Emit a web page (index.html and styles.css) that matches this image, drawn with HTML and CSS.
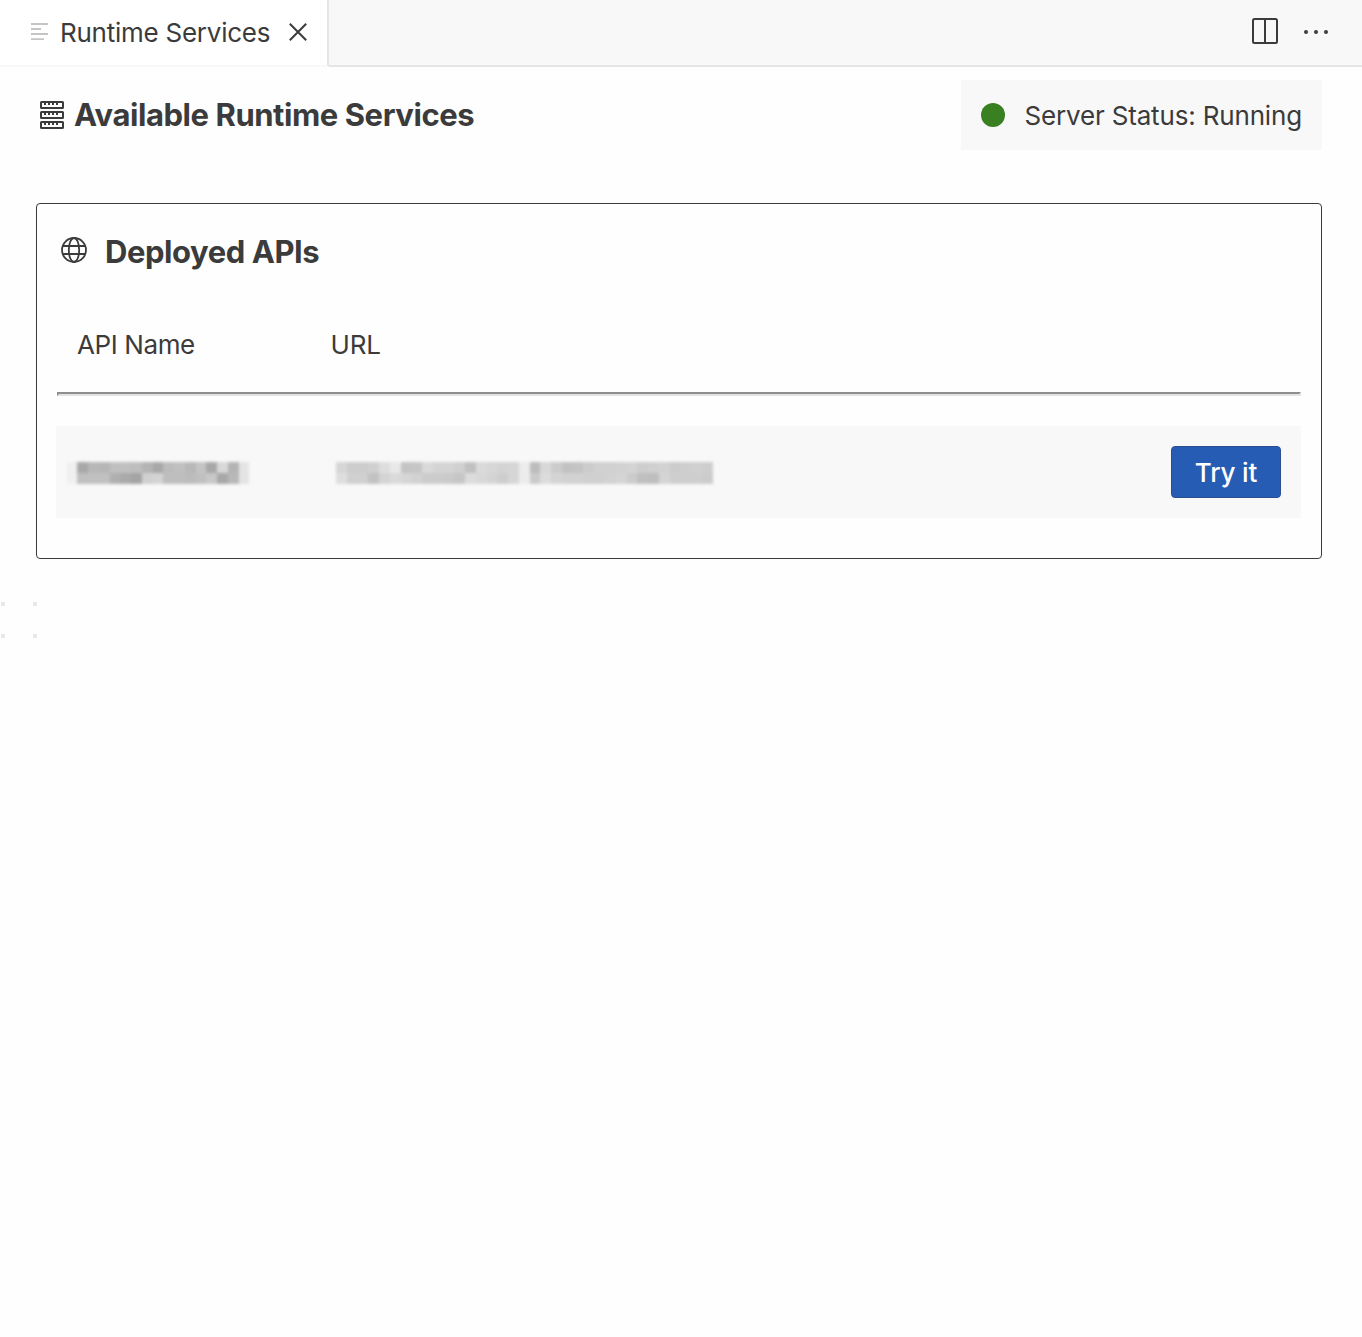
FILE: index.html
```html
<!DOCTYPE html>
<html lang="en">
<head>
<meta charset="utf-8">
<title>Runtime Services</title>
<link rel="stylesheet" href="styles.css">
</head>
<body>
<header class="tabbar">
  <div class="tab">
    <svg class="tab-icon" width="18" height="18" viewBox="0 0 18 18"><path d="M0 1h17M0 6h10M0 11h17M0 16.2h13" stroke="#c5c5c5" stroke-width="1.8"/></svg>
    <span class="tab-label">Runtime Services</span>
    <svg class="close" width="18" height="18" viewBox="0 0 18 18"><path d="M.8.8 17.2 17.2M17.2.8.8 17.2" stroke="#3b3b3b" stroke-width="2"/></svg>
  </div>
  <div class="actions">
    <svg width="26" height="26" viewBox="0 0 26 26" fill="none" stroke="#3b3b3b" stroke-width="2"><rect x="1" y="1" width="24" height="24" rx="1.5"/><path d="M13 1v24"/></svg>
    <svg width="26" height="26" viewBox="0 0 26 26" fill="#3b3b3b"><circle cx="3" cy="14" r="2"/><circle cx="13" cy="14" r="2"/><circle cx="23" cy="14" r="2"/></svg>
  </div>
</header>
<main class="page">
  <div class="heading">
    <div class="title">
      <svg width="24" height="28" viewBox="0 0 24 28" fill="none" stroke="#3b3b3b" stroke-width="2"><g id="unit"><rect x="1" y="1" width="22" height="6" rx=".5"/><path d="M5 1v3M9 1v3M13 1v3M17 1v3"/></g><use href="#unit" y="10"/><use href="#unit" y="20"/></svg>
      <h1>Available Runtime Services</h1>
    </div>
    <div class="status"><span class="dot"></span><span class="status-text">Server Status: Running</span></div>
  </div>
  <section class="panel">
    <div class="panel-title">
      <svg width="26" height="26" viewBox="0 0 26 26" fill="none" stroke="#3b3b3b" stroke-width="1.8"><circle cx="13" cy="13" r="12"/><ellipse cx="13" cy="13" rx="5.2" ry="12"/><path d="M2 9h22M2 17h22"/></svg>
      <h2>Deployed APIs</h2>
    </div>
    <div class="columns"><span class="name-col">API Name</span><span class="url-col">URL</span></div>
    <hr class="rule">
    <div class="row">
      <svg class="masked" id="cells" width="700" height="92" viewBox="0 0 700 92" shape-rendering="crispEdges"></svg>
      <button class="try">Try it</button>
    </div>
  </section>
  <svg class="marks" width="40" height="40" viewBox="0 0 40 40" fill="#e8e8e8"><path d="M1 1h4v4H1zM33 1h4v4h-4zM1 33h4v4H1zM33 33h4v4h-4z"/></svg>
</main>
<script src="mask.js"></script>
</body>
</html>
```
FILE: styles.css
```css
* { box-sizing: border-box; }
body { margin: 0; background: #fefefe; color: #3b3b3b; font: 26px/32px Inter, "Liberation Sans", sans-serif; }
svg { display: block; flex: none; }
h1, h2 { margin: 0; font-size: 31px; line-height: 38px; font-weight: 700; letter-spacing: -0.44px; white-space: nowrap; }
.tabbar { display: flex; justify-content: space-between; height: 67px; background: #f8f8f8; }
.tab { display: flex; align-items: center; width: 329px; padding: 0 0 2px 31px; background: #fff; border-right: 2px solid #e5e5e5; border-bottom: 2px solid #f8f8f8; }
.tab-label { width: 210px; margin: 2px 19px 0 11px; letter-spacing: -0.25px; white-space: nowrap; }
.actions { display: flex; flex: 1; justify-content: flex-end; gap: 25px; padding: 18px 33px 0 0; border-bottom: 2px solid #e5e5e5; }
.page { padding: 13px 40px 0 36px; }
.heading { display: flex; justify-content: space-between; align-items: center; height: 70px; }
.title { display: flex; align-items: center; gap: 10px; padding-left: 4px; }
.status { display: flex; align-items: center; gap: 19.5px; width: 361px; height: 70px; padding-left: 20px; background: #f8f8f8; white-space: nowrap; }
.dot { width: 24px; height: 24px; border-radius: 50%; background: #388022; }
.status-text { padding-top: 2px; letter-spacing: -0.17px; }
.panel { height: 356px; margin-top: 53px; padding: 28px 20px 0; border: 1px solid #3b3b3b; border-radius: 4px; }
.panel-title { display: flex; align-items: flex-start; gap: 18px; padding-left: 4px; height: 97px; }
.panel-title svg { margin-top: 5px; }
.panel-title h2 { padding-top: 1px; }
.columns { display: flex; height: 63px; padding-left: 20px; letter-spacing: -0.4px; }
.name-col { width: 253.5px; }
.url-col { letter-spacing: -0.2px; }
.rule { height: 4px; margin: 0; border: 2px solid; border-color: #8e8e8e #e2e2e2 #e2e2e2 #8e8e8e; }
.row { display: flex; align-items: center; justify-content: space-between; height: 92px; margin: 30px 0 0 -1px; padding-right: 20px; background: #f8f8f8; }
.masked { filter: blur(1.8px); }
.try { width: 110px; height: 52px; padding: 1px 0 0; border: 1px solid #294f92; border-radius: 4px; background: #265cb3; color: #fff; font: 500 26px/32px Inter, sans-serif; letter-spacing: -0.15px; }
.marks { margin: 42px 0 0 -36px; }
```
FILE: mask.js
```javascript
// Masked name and address: two rows of grey levels per value.
const values = [
  { x: 10.7, step: 10.75,
    rows: [
      [240, 168, 184, 182, 192, 192, 190, 180, 168, 188, 192, 184, 196, 168, 216, 180, 228],
      [240, 192, 192, 192, 176, 170, 164, 208, 212, 190, 190, 188, 192, 200, 168, 184, 228]
    ] },
  { x: 280, step: 10.76,
    rows: [
      [214, 205, 205, 208, 222, 232, 196, 198, 218, 212, 212, 208, 192, 218, 214, 212, 214, 236, 188, 216, 204, 194, 196, 204, 208, 208, 210, 212, 206, 208, 210, 204, 206, 208, 206],
      [222, 208, 208, 194, 212, 218, 214, 210, 204, 204, 202, 198, 220, 216, 212, 206, 214, 236, 202, 220, 212, 210, 210, 208, 208, 210, 212, 204, 192, 190, 212, 206, 206, 206, 204]
    ] }
];
const group = document.getElementById("cells");
for (const value of values) {
  value.rows.forEach((row, r) => row.forEach((level, i) => {
    const cell = document.createElementNS("http://www.w3.org/2000/svg", "rect");
    cell.setAttribute("x", value.x + i * value.step);
    cell.setAttribute("y", 36.3 + r * 10.8);
    cell.setAttribute("width", value.step);
    cell.setAttribute("height", 10.8);
    cell.setAttribute("fill", `rgb(${level},${level},${level})`);
    group.appendChild(cell);
  }));
}
```
